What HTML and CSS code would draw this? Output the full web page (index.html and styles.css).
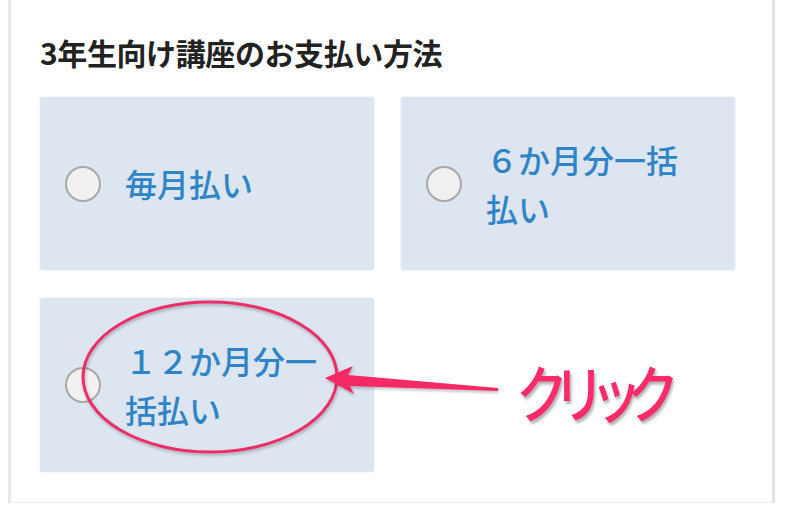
FILE: index.html
```html
<!DOCTYPE html>
<html lang="ja">
<head>
<meta charset="utf-8">
<title>お支払い方法</title>
<link rel="stylesheet" href="styles.css">
</head>
<body>
<div class="page">
  <section class="panel">
    <h2 class="title">3年生向け講座のお支払い方法</h2>
    <div class="options">
      <label class="option">
        <span class="radio"></span>
        <span class="label">毎月払い</span>
      </label>
      <label class="option">
        <span class="radio"></span>
        <span class="label">６か月分一括払い</span>
      </label>
      <label class="option">
        <span class="radio"></span>
        <span class="label">１２か月分一括払い</span>
      </label>
    </div>
  </section>

  <svg class="annot" width="800" height="505" viewBox="0 0 800 505" aria-hidden="true">
    <defs>
      <filter id="sh" x="-20%" y="-20%" width="140%" height="140%">
        <feDropShadow dx="1" dy="2" stdDeviation="1.5" flood-color="#000" flood-opacity="0.25"/>
      </filter>
    </defs>
    <ellipse cx="210" cy="377" rx="127" ry="75" fill="none" stroke="#ec2f68" stroke-width="3" filter="url(#sh)"/>
    <polygon points="325,378 353,366 348,375 498,388 498,391 350,386 354,394" fill="#f42a66" filter="url(#sh)"/>
  </svg>
  <div class="click">クリック</div>
</div>
</body>
</html>
```

FILE: styles.css
```css
html, body {
  margin: 0;
  padding: 0;
  background: #ffffff;
}

.page {
  position: relative;
  width: 800px;
  height: 505px;
  overflow: hidden;
  font-family: "Noto Sans CJK JP", "Noto Sans", sans-serif;
}

.panel {
  box-sizing: border-box;
  margin-left: 8px;
  width: 767px;
  height: 503px;
  border-left: 3px solid #e9e9e9;
  border-right: 3px solid #e2e2e2;
  border-bottom: 1px solid #efefef;
  padding: 32px 0 0 29px;
}

.title {
  margin: 0 0 25px 0;
  font-size: 30px;
  line-height: 40px;
  font-weight: 700;
  color: #222222;
  letter-spacing: -0.4px;
}

.options {
  display: grid;
  grid-template-columns: 334px 334px;
  grid-template-rows: 173px 174px;
  column-gap: 27px;
  row-gap: 28px;
}

.option {
  display: flex;
  align-items: center;
  gap: 24px;
  padding: 0 40px 0 25px;
  background: #dce5f0;
  border-radius: 3px;
  box-shadow: 0 0 2px rgba(120, 140, 170, 0.25);
}

.radio {
  flex: none;
  box-sizing: border-box;
  width: 36px;
  height: 36px;
  border-radius: 50%;
  border: 2px solid #a9a9a9;
  background: #f1f1f1;
}

.label {
  font-size: 32px;
  line-height: 49px;
  color: #2f84c6;
  font-weight: 500;
}

.annot {
  position: absolute;
  left: 0;
  top: 0;
  pointer-events: none;
}

.click {
  position: absolute;
  left: 516px;
  top: 351px;
  font-family: "Noto Sans CJK JP", sans-serif;
  font-size: 62px;
  line-height: 80px;
  font-weight: 500;
  letter-spacing: -18px;
  color: #fb2a68;
  -webkit-text-stroke: 5px #ffffff;
  paint-order: stroke fill;
  text-shadow: 2px 3px 3px rgba(0, 0, 0, 0.3);
  transform: scaleX(0.84);
  transform-origin: left center;
}
```
